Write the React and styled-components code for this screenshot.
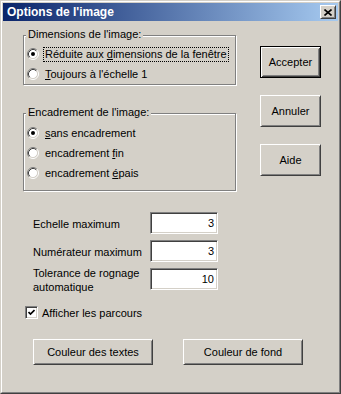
import React from 'react';
import styled, { createGlobalStyle } from 'styled-components';

const Global = createGlobalStyle`
  html, body { margin: 0; padding: 0; background: #d4d0c8; }
  body {
    font-family: "Liberation Sans", Arial, sans-serif;
    font-size: 11px;
    color: #000;
  }
  * { box-sizing: border-box; }
`;

const Window = styled.div`
  width: 341px;
  height: 394px;
  border: 1px solid;
  border-color: #d4d0c8 #404040 #404040 #d4d0c8;
  background: #d4d0c8;
`;

const Frame = styled.div`
  height: 100%;
  border: 1px solid;
  border-color: #ffffff #808080 #808080 #ffffff;
  padding: 1px;
  display: flex;
  flex-direction: column;
`;

const TitleBar = styled.div`
  height: 18px;
  flex: none;
  display: flex;
  align-items: center;
  padding: 0 2px;
  background: linear-gradient(to right, #0a246a, #a6caf0);
`;

const Title = styled.span`
  margin-left: 2px;
  color: #fff;
  font-weight: bold;
  font-size: 12px;
  line-height: 14px;
`;

const CloseButton = styled.div`
  margin-left: auto;
  width: 16px;
  height: 14px;
  display: flex;
  align-items: center;
  justify-content: center;
  background: #d4d0c8;
  border: 1px solid;
  border-color: #ffffff #404040 #404040 #ffffff;
  box-shadow: inset 1px 1px #d4d0c8, inset -1px -1px #808080;
`;

const Body = styled.div`
  display: flex;
  flex-direction: column;
  padding: 14px 0 0 20px;
`;

const TopSection = styled.div`
  display: flex;
  align-items: flex-start;
`;

const LeftCol = styled.div`
  width: 213px;
  display: flex;
  flex-direction: column;
`;

const Group = styled.div`
  position: relative;
  height: ${(p) => p.$h}px;
  margin-top: ${(p) => p.$mt || 0}px;
  padding: ${(p) => p.$pt}px 0 0 3px;
  border: 1px solid #808080;
  box-shadow: inset 1px 1px #ffffff, 1px 1px #ffffff;
`;

const Legend = styled.span`
  position: absolute;
  top: -8px;
  left: 2px;
  padding: 0 2px;
  line-height: 13px;
  background: #d4d0c8;
`;

const RadioRow = styled.div`
  height: 20px;
  display: flex;
  align-items: center;
  gap: 4px;
`;

const OptionLabel = styled.span`
  line-height: 13px;
  padding: 0 1px;
  border: 1px ${(p) => (p.$focus ? 'dotted #000' : 'solid transparent')};
`;

const ButtonCol = styled.div`
  margin-left: 24px;
  margin-top: 11px;
  display: flex;
  flex-direction: column;
  gap: 17px;
`;

const Button = styled.div`
  width: ${(p) => p.$w}px;
  height: ${(p) => p.$h}px;
  display: flex;
  align-items: center;
  justify-content: center;
  background: #d4d0c8;
  border: 1px solid;
  border-color: ${(p) => (p.$default ? '#000' : '#ffffff #404040 #404040 #ffffff')};
  box-shadow: ${(p) =>
    p.$default
      ? 'inset 1px 1px #fff, inset -1px -1px #404040, inset 2px 2px #d4d0c8, inset -2px -2px #808080'
      : 'inset 1px 1px #d4d0c8, inset -1px -1px #808080'};
  font-size: 11px;
`;

const FieldGrid = styled.div`
  margin-top: 21px;
  padding-left: 10px;
  display: grid;
  grid-template-columns: 117px 68px;
  grid-template-rows: 22px 22px 22px;
  row-gap: 6px;
  align-items: center;
`;

const FieldLabel = styled.span`
  line-height: 14px;
  padding-top: 1px;
`;

const Field = styled.div`
  height: 22px;
  display: flex;
  align-items: center;
  justify-content: flex-end;
  padding-right: 3px;
  background: #fff;
  border: 1px solid;
  border-color: #808080 #ffffff #ffffff #808080;
  box-shadow: inset 1px 1px #404040, inset -1px -1px #d4d0c8;
`;

const CheckRow = styled.div`
  margin-top: 16px;
  padding-left: 2px;
  display: flex;
  align-items: center;
  gap: 4px;
  height: 13px;
`;

const CheckBox = styled.div`
  width: 13px;
  height: 13px;
  display: flex;
  align-items: center;
  justify-content: center;
  background: #fff;
  border: 1px solid;
  border-color: #808080 #ffffff #ffffff #808080;
  box-shadow: inset 1px 1px #404040, inset -1px -1px #d4d0c8;
`;

const BottomRow = styled.div`
  margin-top: 20px;
  padding-left: 10px;
  display: flex;
  gap: 30px;
`;

const Radio = ({ checked }) => (
  <svg width="12" height="12" viewBox="0 0 12 12" style={{ flex: 'none' }}>
    <circle cx="6" cy="6" r="4.5" fill="#fff" />
    <path d="M2.11 9.89 A5.5 5.5 0 0 1 9.89 2.11" stroke="#808080" strokeWidth="1" fill="none" />
    <path d="M9.89 2.11 A5.5 5.5 0 0 1 2.11 9.89" stroke="#ffffff" strokeWidth="1" fill="none" />
    <path d="M2.82 9.18 A4.5 4.5 0 0 1 9.18 2.82" stroke="#404040" strokeWidth="1" fill="none" />
    <path d="M9.18 2.82 A4.5 4.5 0 0 1 2.82 9.18" stroke="#d4d0c8" strokeWidth="1" fill="none" />
    {checked && <circle cx="6" cy="6" r="2" fill="#000" />}
  </svg>
);

export default function App() {
  return (
    <>
      <Global />
      <Window>
        <Frame>
          <TitleBar>
            <Title>Options de l'image</Title>
            <CloseButton>
              <svg width="8" height="7" viewBox="0 0 8 7">
                <path d="M0.5 0.5 L7.5 6.5 M7.5 0.5 L0.5 6.5" stroke="#000" strokeWidth="1.6" />
              </svg>
            </CloseButton>
          </TitleBar>
          <Body>
            <TopSection>
              <LeftCol>
                <Group $h={50} $pt={8}>
                  <Legend>Dimensions de l'image:</Legend>
                  <RadioRow>
                    <Radio checked />
                    <OptionLabel $focus>
                      Réduite aux <u>d</u>imensions de la fenêtre
                    </OptionLabel>
                  </RadioRow>
                  <RadioRow>
                    <Radio />
                    <OptionLabel>
                      <u>T</u>oujours à l'échelle 1
                    </OptionLabel>
                  </RadioRow>
                </Group>
                <Group $h={78} $pt={9} $mt={28}>
                  <Legend>Encadrement de l'image:</Legend>
                  <RadioRow>
                    <Radio checked />
                    <OptionLabel>
                      <u>s</u>ans encadrement
                    </OptionLabel>
                  </RadioRow>
                  <RadioRow>
                    <Radio />
                    <OptionLabel>
                      encadrement <u>f</u>in
                    </OptionLabel>
                  </RadioRow>
                  <RadioRow>
                    <Radio />
                    <OptionLabel>
                      encadrement <u>é</u>pais
                    </OptionLabel>
                  </RadioRow>
                </Group>
              </LeftCol>
              <ButtonCol>
                <Button $w={61} $h={32} $default>Accepter</Button>
                <Button $w={61} $h={32}>Annuler</Button>
                <Button $w={61} $h={32}>Aide</Button>
              </ButtonCol>
            </TopSection>
            <FieldGrid>
              <FieldLabel>Echelle maximum</FieldLabel>
              <Field>3</Field>
              <FieldLabel>Numérateur maximum</FieldLabel>
              <Field>3</Field>
              <FieldLabel>
                Tolerance de rognage
                <br />
                automatique
              </FieldLabel>
              <Field>10</Field>
            </FieldGrid>
            <CheckRow>
              <CheckBox>
                <svg width="7" height="7" viewBox="0 0 7 7">
                  <path d="M0.5 3 L2.5 5 L6.5 1" stroke="#000" strokeWidth="1.7" fill="none" />
                </svg>
              </CheckBox>
              <span>Afficher les parcours</span>
            </CheckRow>
            <BottomRow>
              <Button $w={120} $h={26}>Couleur des textes</Button>
              <Button $w={120} $h={26}>Couleur de fond</Button>
            </BottomRow>
          </Body>
        </Frame>
      </Window>
    </>
  );
}
